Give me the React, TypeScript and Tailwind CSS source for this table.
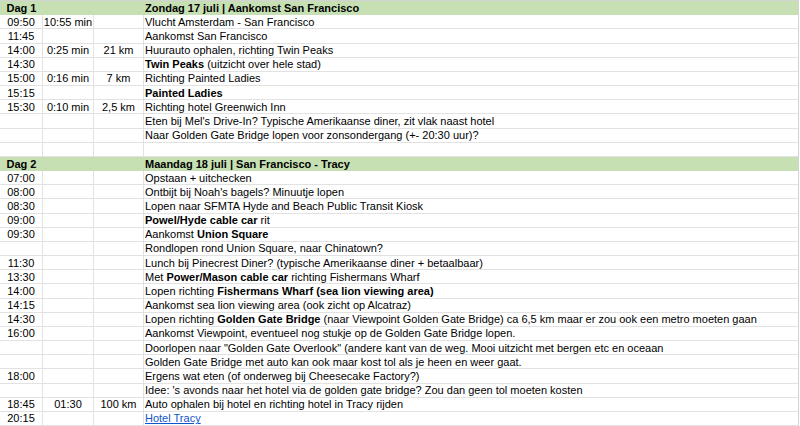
import React from "react";

type Seg = string | { b: string } | { link: string };
type Row =
  | { kind: "header"; day: string; title: string }
  | { kind: "row"; a?: string; b?: string; c?: string; d?: Seg[] };

const rows: Row[] = [
  { kind: "header", day: "Dag 1", title: "Zondag 17 juli | Aankomst San Francisco" },
  { kind: "row", a: "09:50", b: "10:55 min", d: ["Vlucht Amsterdam - San Francisco"] },
  { kind: "row", a: "11:45", d: ["Aankomst San Francisco"] },
  { kind: "row", a: "14:00", b: "0:25 min", c: "21 km", d: ["Huurauto ophalen, richting Twin Peaks"] },
  { kind: "row", a: "14:30", d: [{ b: "Twin Peaks" }, " (uitzicht over hele stad)"] },
  { kind: "row", a: "15:00", b: "0:16 min", c: "7 km", d: ["Richting Painted Ladies"] },
  { kind: "row", a: "15:15", d: [{ b: "Painted Ladies" }] },
  { kind: "row", a: "15:30", b: "0:10 min", c: "2,5 km", d: ["Richting hotel Greenwich Inn"] },
  { kind: "row", d: ["Eten bij Mel's Drive-In? Typische Amerikaanse diner, zit vlak naast hotel"] },
  { kind: "row", d: ["Naar Golden Gate Bridge lopen voor zonsondergang (+- 20:30 uur)?"] },
  { kind: "row" },
  { kind: "header", day: "Dag 2", title: "Maandag 18 juli | San Francisco - Tracy" },
  { kind: "row", a: "07:00", d: ["Opstaan + uitchecken"] },
  { kind: "row", a: "08:00", d: ["Ontbijt bij Noah's bagels? Minuutje lopen"] },
  { kind: "row", a: "08:30", d: ["Lopen naar SFMTA Hyde and Beach Public Transit Kiosk"] },
  { kind: "row", a: "09:00", d: [{ b: "Powel/Hyde cable car" }, " rit"] },
  { kind: "row", a: "09:30", d: ["Aankomst ", { b: "Union Square" }] },
  { kind: "row", d: ["Rondlopen rond Union Square, naar Chinatown?"] },
  { kind: "row", a: "11:30", d: ["Lunch bij Pinecrest Diner? (typische Amerikaanse diner + betaalbaar)"] },
  { kind: "row", a: "13:30", d: ["Met ", { b: "Power/Mason cable car" }, " richting Fishermans Wharf"] },
  { kind: "row", a: "14:00", d: ["Lopen richting ", { b: "Fishermans Wharf (sea lion viewing area)" }] },
  { kind: "row", a: "14:15", d: ["Aankomst sea lion viewing area (ook zicht op Alcatraz)"] },
  {
    kind: "row",
    a: "14:30",
    d: [
      "Lopen richting ",
      { b: "Golden Gate Bridge" },
      " (naar Viewpoint Golden Gate Bridge) ca 6,5 km maar er zou ook een metro moeten gaan",
    ],
  },
  { kind: "row", a: "16:00", d: ["Aankomst Viewpoint, eventueel nog stukje op de Golden Gate Bridge lopen."] },
  { kind: "row", d: ['Doorlopen naar "Golden Gate Overlook" (andere kant van de weg. Mooi uitzicht met bergen etc en oceaan'] },
  { kind: "row", d: ["Golden Gate Bridge met auto kan ook maar kost tol als je heen en weer gaat."] },
  { kind: "row", a: "18:00", d: ["Ergens wat eten (of onderweg bij Cheesecake Factory?)"] },
  { kind: "row", d: ["Idee: 's avonds naar het hotel via de golden gate bridge? Zou dan geen tol moeten kosten"] },
  { kind: "row", a: "18:45", b: "01:30", c: "100 km", d: ["Auto ophalen bij hotel en richting hotel in Tracy rijden"] },
  { kind: "row", a: "20:15", d: [{ link: "Hotel Tracy" }] },
];

function renderSeg(s: Seg, i: number) {
  if (typeof s === "string") return <React.Fragment key={i}>{s}</React.Fragment>;
  if ("b" in s) return <b key={i} className="font-bold">{s.b}</b>;
  return (
    <span key={i} className="text-[#1155cc] underline underline-offset-[1px]">
      {s.link}
    </span>
  );
}

const cell = "flex items-center border-r border-b border-[#e2e2e2] overflow-hidden whitespace-nowrap pt-[1px]";

export default function App() {
  return (
    <div
      className="w-[800px] h-[426px] bg-white text-black text-[11px] leading-[13px]"
      style={{ fontFamily: '"Liberation Sans", Arial, sans-serif' }}
    >
      <div className="grid w-[799px] h-[426px] grid-cols-[43px_51px_50px_655px] grid-rows-[repeat(30,minmax(0,1fr))] border-t border-[#d4d4d4]">
        {rows.map((r, i) =>
          r.kind === "header" ? (
            <div
              key={i}
              className="col-span-4 flex items-center bg-[#c6e0b4] border-r border-[#d4d4d4] font-bold pt-[1px]"
            >
              <div className="w-[144px] flex">
                <span className="w-[43px] text-center">{r.day}</span>
              </div>
              <span className="pl-[1px]">{r.title}</span>
            </div>
          ) : (
            <React.Fragment key={i}>
              <div className={`${cell} justify-center`}>{r.a}</div>
              <div className={`${cell} justify-center`}>{r.b}</div>
              <div className={`${cell} justify-center`}>{r.c}</div>
              <div className={`${cell} pl-[1px] border-r-[#d4d4d4]`}>
                <span>{r.d?.map(renderSeg)}</span>
              </div>
            </React.Fragment>
          )
        )}
      </div>
    </div>
  );
}
